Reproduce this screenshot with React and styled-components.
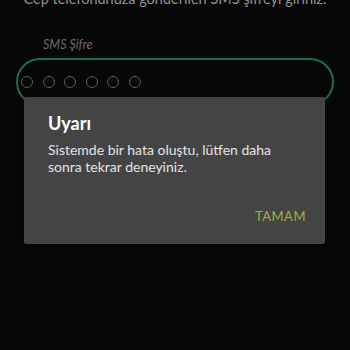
import React from 'react';
import styled, { createGlobalStyle } from 'styled-components';

const GlobalStyle = createGlobalStyle`
  html, body {
    margin: 0;
    padding: 0;
    background: #070707;
  }
  body {
    width: 350px;
    height: 350px;
    overflow: hidden;
    font-family: Lato, 'Open Sans', sans-serif;
  }
`;

const Screen = styled.div`
  position: relative;
  width: 350px;
  height: 350px;
  background: #070707;
  overflow: hidden;
`;

const Form = styled.div`
  display: flex;
  flex-direction: column;
  padding: 0 16px;
`;

const Hint = styled.div`
  margin-top: -10px;
  text-align: center;
  color: #939393;
  font-size: 14.5px;
  line-height: 18px;
  white-space: nowrap;
`;

const FieldLabel = styled.div`
  margin: 29px 0 0 27px;
  color: #6c6c6c;
  font-size: 12.5px;
  font-style: italic;
  line-height: 16px;
`;

const CodeBox = styled.div`
  margin-top: 5px;
  height: 48px;
  border: 2px solid #1b6b5a;
  border-radius: 24px;
  box-sizing: border-box;
  display: flex;
  align-items: center;
  gap: 9.5px;
  padding: 0 0 0 3px;
`;

const Dot = styled.span`
  width: 12px;
  height: 12px;
  box-sizing: border-box;
  border: 1.5px solid #5c5c5c;
  border-radius: 50%;
`;

const Dialog = styled.div`
  position: absolute;
  left: 24px;
  top: 97px;
  width: 301px;
  height: 147px;
  box-sizing: border-box;
  background: #444444;
  border-radius: 2px;
  box-shadow: 0 2px 6px rgba(0, 0, 0, 0.5);
  padding: 15px 24px 0 24px;
  display: flex;
  flex-direction: column;
`;

const Title = styled.div`
  color: #ffffff;
  font-size: 18px;
  font-weight: 700;
  line-height: 22px;
`;

const Message = styled.div`
  margin-top: 7px;
  color: #e4e4e4;
  font-size: 14px;
  line-height: 17px;
`;

const Actions = styled.div`
  margin-top: auto;
  display: flex;
  justify-content: flex-end;
  padding-bottom: 20px;
`;

const ActionButton = styled.button`
  background: none;
  border: none;
  padding: 0;
  margin-right: -5px;
  color: #9cb33c;
  font-family: inherit;
  font-size: 13px;
  letter-spacing: 0.5px;
  line-height: 16px;
`;

export default function App() {
  return (
    <Screen>
      <GlobalStyle />
      <Form>
        <Hint>Cep telefonunuza gönderilen SMS şifreyi giriniz.</Hint>
        <FieldLabel>SMS Şifre</FieldLabel>
        <CodeBox>
          {[0, 1, 2, 3, 4, 5].map(i => (
            <Dot key={i} />
          ))}
        </CodeBox>
      </Form>
      <Dialog>
        <Title>Uyarı</Title>
        <Message>
          Sistemde bir hata oluştu, lütfen daha
          <br />
          sonra tekrar deneyiniz.
        </Message>
        <Actions>
          <ActionButton>TAMAM</ActionButton>
        </Actions>
      </Dialog>
    </Screen>
  );
}
